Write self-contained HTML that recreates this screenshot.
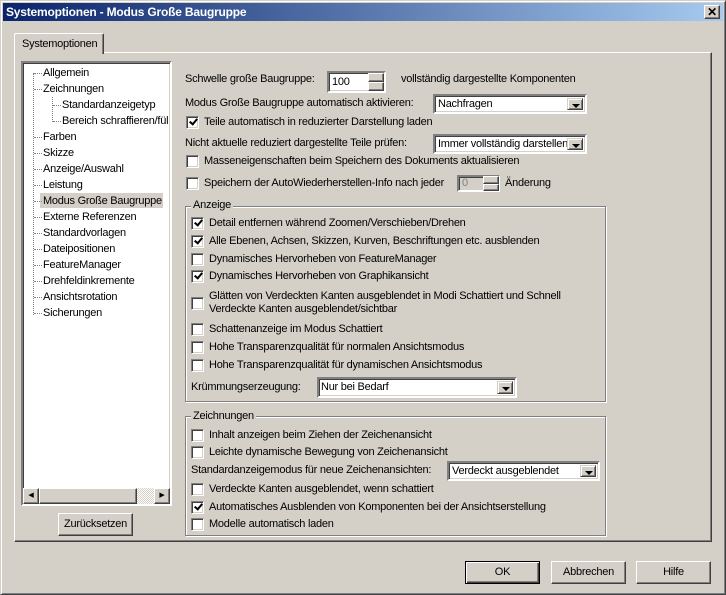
<!DOCTYPE html>
<html><head><meta charset="utf-8"><style>
*{box-sizing:border-box;margin:0;padding:0}
body{width:726px;height:595px;background:#d4d0c8;font:11px "Liberation Sans",sans-serif;letter-spacing:-0.25px;color:#000;position:relative;overflow:hidden}
.a{position:absolute;white-space:nowrap}
.t{position:absolute;white-space:nowrap;line-height:13px}
.sunk{position:absolute;background:#fff;border:2px solid;border-color:#808080 #fff #fff #808080;box-shadow:inset 1px 1px 0 #404040,inset -1px -1px 0 #d4d0c8}
.btn{position:absolute;background:#d4d0c8;border:1px solid;border-color:#fff #404040 #404040 #fff;box-shadow:inset -1px -1px 0 #808080;text-align:center}
.cb{position:absolute;width:13px;height:13px;background:#fff;border:1px solid;border-color:#808080 #fff #fff #808080;box-shadow:inset 1px 1px 0 #404040,inset -1px -1px 0 #d4d0c8}
.cb.c::after{content:"";position:absolute;top:0px;width:3px;height:6px;border:solid #000;border-width:0 2px 2px 0;transform:rotate(40deg);left:4px}
.grp{position:absolute;border:1px solid #808080;box-shadow:1px 1px 0 #fff,inset 1px 1px 0 #fff}
.gl{position:absolute;background:#d4d0c8;padding:0 2px;line-height:13px}
.dd{position:absolute;right:2px;top:2px;width:16px;bottom:2px;background:#d4d0c8;border:1px solid;border-color:#d4d0c8 #404040 #404040 #d4d0c8;box-shadow:inset 1px 1px 0 #fff,inset -1px -1px 0 #808080}
.dd::after{content:"";position:absolute;left:4px;top:5px;border:4px solid transparent;border-top:4px solid #000;border-bottom:0;}
.tv{position:absolute;left:33px;border-left:1px dotted #808080}
.th{position:absolute;width:8px;border-top:1px dotted #808080}
</style></head><body>
<div class="a" style="left:0;top:0;width:726px;height:595px;border:1px solid;border-color:#d4d0c8 #404040 #404040 #d4d0c8;box-shadow:inset 1px 1px 0 #fff,inset -1px -1px 0 #808080"></div>
<div class="a" style="left:3px;top:3px;width:720px;height:18px;background:linear-gradient(90deg,#0a246a,#a6caf0)"></div>
<div class="a" style="left:6px;top:3px;line-height:18px;color:#fff;font-weight:bold;font-size:12px;letter-spacing:-0.2px">Systemoptionen - Modus Große Baugruppe</div>
<div class="btn" style="left:704px;top:5px;width:16px;height:14px;line-height:12px;font-weight:bold;font-size:12px">✕</div>
<div class="a" style="left:14px;top:52px;width:698px;height:490px;border:1px solid;border-color:#fff #404040 #404040 #fff;box-shadow:inset -1px -1px 0 #808080"></div>
<div class="a" style="left:14px;top:33px;width:90px;height:21px;background:#d4d0c8;border:1px solid;border-color:#fff #404040 transparent #fff;border-bottom:0;border-radius:2px 2px 0 0;box-shadow:inset -1px 0 0 #808080"></div>
<div class="t" style="left:22px;top:38px">Systemoptionen</div>
<div class="sunk" style="left:21px;top:61px;width:151px;height:445px"></div>
<div class="tv" style="top:73px;height:242px"></div>
<div class="a" style="left:52px;top:97px;height:25px;border-left:1px dotted #808080"></div>
<div class="a" style="left:23px;top:488px;width:147px;height:16px;background:#e8e6e2"></div>
<div class="btn" style="left:23px;top:488px;width:16px;height:16px;font-size:7px;line-height:14px">◀</div>
<div class="btn" style="left:39px;top:488px;width:98px;height:16px"></div>
<div class="a" style="left:137px;top:488px;width:17px;height:16px;background:repeating-conic-gradient(#d4d0c8 0 25%,#fff 0 50%) 0 0/2px 2px"></div>
<div class="btn" style="left:154px;top:488px;width:16px;height:16px;font-size:7px;line-height:14px">▶</div>
<div class="a" style="left:40px;top:193px;width:123px;height:15px;background:#d4d0c8"></div>
<div class="btn" style="left:58px;top:513px;width:75px;height:23px;line-height:20px">Zurücksetzen</div>
<div class="t" style="left:185px;top:73px">Schwelle große Baugruppe:</div>
<div class="sunk" style="left:327px;top:71px;width:59px;height:22px;padding:2px 0 0 3px;line-height:14px">100</div>
<div class="btn" style="left:368px;top:73px;width:16px;height:9px"></div><div class="btn" style="left:368px;top:82px;width:16px;height:9px"></div>
<div class="t" style="left:401px;top:73px">vollständig dargestellte Komponenten</div>
<div class="t" style="left:185px;top:97px">Modus Große Baugruppe automatisch aktivieren:</div>
<div class="sunk" style="left:433px;top:94px;width:154px;height:20px;padding:1px 0 0 3px;line-height:14px">Nachfragen<div class="dd"></div></div>
<div class="cb c" style="left:186px;top:116px"></div><div class="t" style="left:204px;top:116px">Teile automatisch in reduzierter Darstellung laden</div>
<div class="t" style="left:185px;top:137px">Nicht aktuelle reduziert dargestellte Teile prüfen:</div>
<div class="sunk" style="left:433px;top:134px;width:154px;height:20px;padding:1px 0 0 3px;line-height:14px;overflow:hidden">Immer vollständig darstellen<div class="dd"></div></div>
<div class="cb" style="left:186px;top:155px"></div><div class="t" style="left:204px;top:155px">Masseneigenschaften beim Speichern des Dokuments aktualisieren</div>
<div class="cb" style="left:186px;top:177px"></div><div class="t" style="left:204px;top:177px">Speichern der AutoWiederherstellen-Info nach jeder</div>
<div class="sunk" style="left:457px;top:175px;width:43px;height:17px;background:#d4d0c8;color:#808080;padding:0 0 0 3px;line-height:13px">0</div>
<div class="btn" style="left:483px;top:176px;width:16px;height:8px"></div><div class="btn" style="left:483px;top:184px;width:16px;height:7px"></div>
<div class="t" style="left:505px;top:177px">Änderung</div>
<div class="grp" style="left:185px;top:206px;width:421px;height:196px"></div>
<div class="gl" style="left:191px;top:199px">Anzeige</div>
<div class="cb c" style="left:191px;top:217px"></div><div class="t" style="left:209px;top:217px">Detail entfernen während Zoomen/Verschieben/Drehen</div>
<div class="cb c" style="left:191px;top:235px"></div><div class="t" style="left:209px;top:235px">Alle Ebenen, Achsen, Skizzen, Kurven, Beschriftungen etc. ausblenden</div>
<div class="cb" style="left:191px;top:253px"></div><div class="t" style="left:209px;top:253px">Dynamisches Hervorheben von FeatureManager</div>
<div class="cb c" style="left:191px;top:270px"></div><div class="t" style="left:209px;top:270px">Dynamisches Hervorheben von Graphikansicht</div>
<div class="cb" style="left:191px;top:297px"></div><div class="t" style="left:209px;top:290px">Glätten von Verdeckten Kanten ausgeblendet in Modi Schattiert und Schnell<br>Verdeckte Kanten ausgeblendet/sichtbar</div>
<div class="cb" style="left:191px;top:323px"></div><div class="t" style="left:209px;top:323px">Schattenanzeige im Modus Schattiert</div>
<div class="cb" style="left:191px;top:341px"></div><div class="t" style="left:209px;top:341px">Hohe Transparenzqualität für normalen Ansichtsmodus</div>
<div class="cb" style="left:191px;top:359px"></div><div class="t" style="left:209px;top:359px">Hohe Transparenzqualität für dynamischen Ansichtsmodus</div>
<div class="t" style="left:191px;top:381px">Krümmungserzeugung:</div>
<div class="sunk" style="left:317px;top:377px;width:200px;height:21px;padding:1px 0 0 2px;line-height:15px">Nur bei Bedarf<div class="dd"></div></div>
<div class="grp" style="left:185px;top:416px;width:421px;height:120px"></div>
<div class="gl" style="left:191px;top:410px">Zeichnungen</div>
<div class="cb" style="left:191px;top:429px"></div><div class="t" style="left:209px;top:429px">Inhalt anzeigen beim Ziehen der Zeichenansicht</div>
<div class="cb" style="left:191px;top:446px"></div><div class="t" style="left:209px;top:446px">Leichte dynamische Bewegung von Zeichenansicht</div>
<div class="t" style="left:191px;top:464px">Standardanzeigemodus für neue Zeichenansichten:</div>
<div class="sunk" style="left:447px;top:461px;width:153px;height:20px;padding:1px 0 0 3px;line-height:14px">Verdeckt ausgeblendet<div class="dd"></div></div>
<div class="cb" style="left:191px;top:483px"></div><div class="t" style="left:209px;top:483px">Verdeckte Kanten ausgeblendet, wenn schattiert</div>
<div class="cb c" style="left:191px;top:501px"></div><div class="t" style="left:209px;top:501px">Automatisches Ausblenden von Komponenten bei der Ansichtserstellung</div>
<div class="cb" style="left:191px;top:518px"></div><div class="t" style="left:209px;top:518px">Modelle automatisch laden</div>
<div class="btn" style="left:465px;top:561px;width:75px;height:23px;line-height:20px;border:1px solid #000;box-shadow:inset 1px 1px 0 #fff,inset -1px -1px 0 #404040,inset -2px -2px 0 #808080">OK</div>
<div class="btn" style="left:551px;top:561px;width:75px;height:23px;line-height:20px">Abbrechen</div>
<div class="btn" style="left:636px;top:561px;width:75px;height:23px;line-height:20px">Hilfe</div>
<div class="th" style="left:34px;top:73px"></div><div class="t" style="left:43px;top:67px">Allgemein</div>
<div class="th" style="left:34px;top:89px"></div><div class="t" style="left:43px;top:83px">Zeichnungen</div>
<div class="th" style="left:53px;top:105px"></div><div class="t" style="left:62px;top:99px">Standardanzeigetyp</div>
<div class="th" style="left:53px;top:121px"></div><div class="t" style="left:62px;top:115px;width:106px;overflow:hidden">Bereich schraffieren/füllen</div>
<div class="th" style="left:34px;top:137px"></div><div class="t" style="left:43px;top:131px">Farben</div>
<div class="th" style="left:34px;top:153px"></div><div class="t" style="left:43px;top:147px">Skizze</div>
<div class="th" style="left:34px;top:169px"></div><div class="t" style="left:43px;top:163px">Anzeige/Auswahl</div>
<div class="th" style="left:34px;top:185px"></div><div class="t" style="left:43px;top:179px">Leistung</div>
<div class="th" style="left:34px;top:201px"></div><div class="t" style="left:43px;top:195px">Modus Große Baugruppe</div>
<div class="th" style="left:34px;top:217px"></div><div class="t" style="left:43px;top:211px">Externe Referenzen</div>
<div class="th" style="left:34px;top:233px"></div><div class="t" style="left:43px;top:227px">Standardvorlagen</div>
<div class="th" style="left:34px;top:249px"></div><div class="t" style="left:43px;top:243px">Dateipositionen</div>
<div class="th" style="left:34px;top:265px"></div><div class="t" style="left:43px;top:259px">FeatureManager</div>
<div class="th" style="left:34px;top:281px"></div><div class="t" style="left:43px;top:275px">Drehfeldinkremente</div>
<div class="th" style="left:34px;top:297px"></div><div class="t" style="left:43px;top:291px">Ansichtsrotation</div>
<div class="th" style="left:34px;top:313px"></div><div class="t" style="left:43px;top:307px">Sicherungen</div>
</body></html>
